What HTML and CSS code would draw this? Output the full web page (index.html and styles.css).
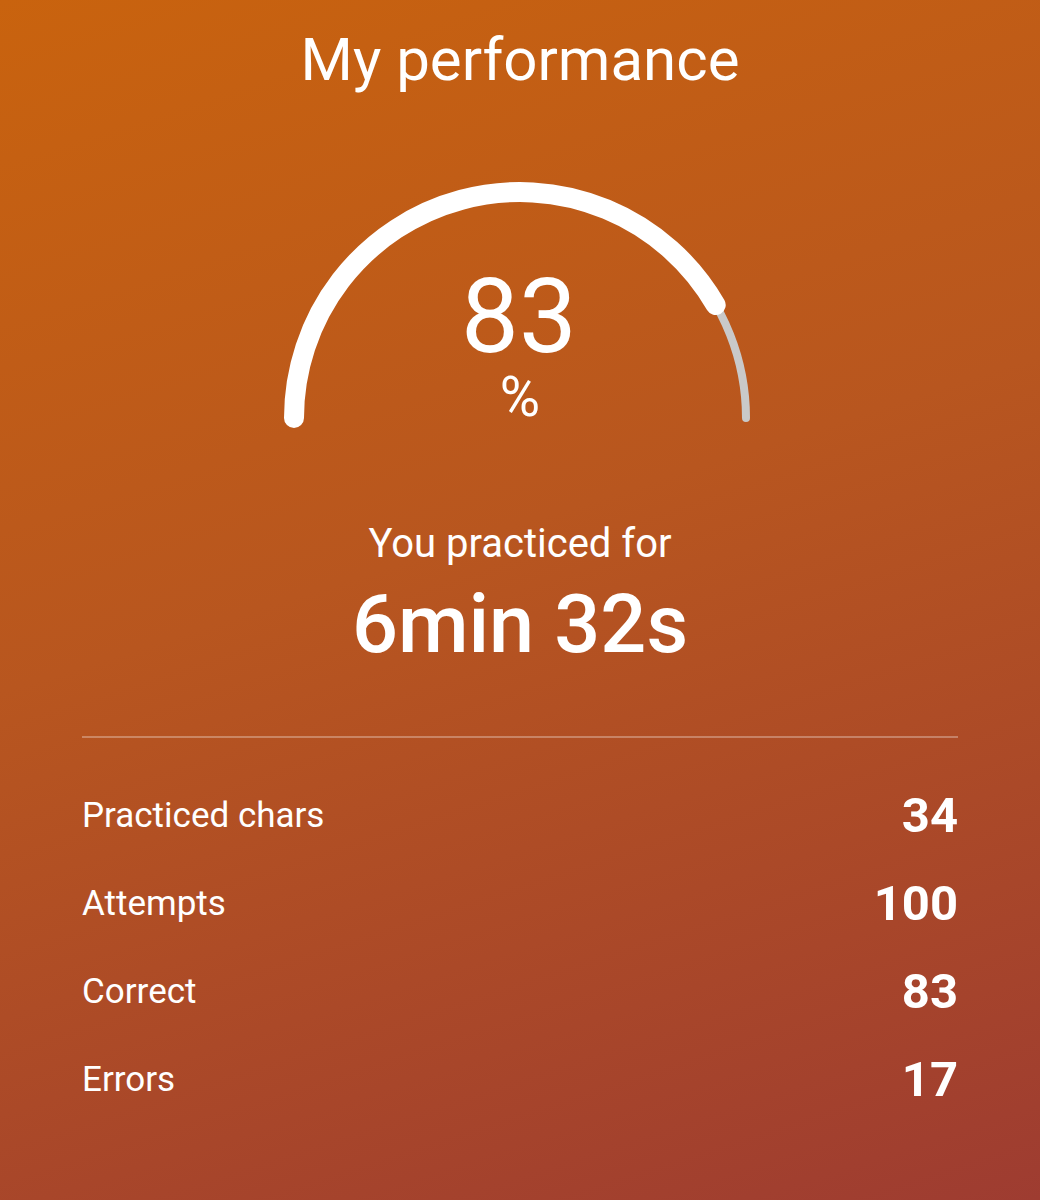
FILE: index.html
```html
<!DOCTYPE html>
<html lang="en">
<head>
    <meta charset="UTF-8">
    <meta name="viewport" content="width=device-width, initial-scale=1.0">
    <title>My performance</title>
    <link rel="stylesheet" href="styles.css">
</head>
<body>

    <div class="screen">
        <h1 class="title">My performance</h1>

        <!-- Score gauge: half circle, white part = score -->
        <div class="gauge">
            <svg width="480" height="250" viewBox="0 0 480 250">
                <path class="gauge-track" d="M 14 236 A 226 226 0 0 1 466 236" />
                <path class="gauge-fill" d="M 14 236 A 226 226 0 0 1 435.7 123" />
                <text class="gauge-value" x="239" y="170">83</text>
                <text class="gauge-unit" x="240" y="234">%</text>
            </svg>
        </div>

        <p class="practice-label">You practiced for</p>
        <p class="practice-time">6min 32s</p>

        <hr class="divider">

        <div class="stats">
            <div class="stat-row">
                <span class="stat-name">Practiced chars</span>
                <span class="stat-value">34</span>
            </div>
            <div class="stat-row">
                <span class="stat-name">Attempts</span>
                <span class="stat-value">100</span>
            </div>
            <div class="stat-row">
                <span class="stat-name">Correct</span>
                <span class="stat-value">83</span>
            </div>
            <div class="stat-row">
                <span class="stat-name">Errors</span>
                <span class="stat-value">17</span>
            </div>
        </div>
    </div>

</body>
</html>
```

FILE: styles.css
```css
body {
    margin: 0;
    padding: 0;
    font-family: 'Roboto', 'Noto Sans', sans-serif;
    color: #fff;
}

.screen {
    height: 1200px;
    box-sizing: border-box;
    padding: 24px 82px 0;
    background: linear-gradient(162deg, #c9630e 0%, #b8561f 45%, #9e3c31 100%);
    display: flex;
    flex-direction: column;
    align-items: center;
}

.title {
    margin: 0;
    font-size: 60px;
    line-height: 72px;
    font-weight: 400;
}

.gauge {
    margin-top: 86px;
    height: 250px;
}

.gauge svg {
    display: block;
}

.gauge-track {
    fill: none;
    stroke: #c9c9c9;
    stroke-width: 8;
    stroke-linecap: round;
}

.gauge-fill {
    fill: none;
    stroke: #fff;
    stroke-width: 20;
    stroke-linecap: round;
}

.gauge-value {
    fill: #fff;
    font-size: 103px;
    font-weight: 400;
    text-anchor: middle;
}

.gauge-unit {
    fill: #fff;
    font-size: 55px;
    font-weight: 400;
    text-anchor: middle;
}

.practice-label {
    margin: 88px 0 0;
    font-size: 40px;
    line-height: 48px;
}

.practice-time {
    margin: 9px 0 0;
    font-size: 81px;
    line-height: 96px;
    font-weight: 500;
}

.divider {
    align-self: stretch;
    margin: 63px 0 0;
    border: none;
    height: 2px;
    background-color: rgba(255, 255, 255, 0.3);
}

.stats {
    align-self: stretch;
    margin-top: 33px;
}

.stat-row {
    height: 88px;
    display: flex;
    justify-content: space-between;
    align-items: center;
}

.stat-name {
    font-size: 35px;
}

.stat-value {
    font-size: 49px;
    font-weight: 700;
}
```
